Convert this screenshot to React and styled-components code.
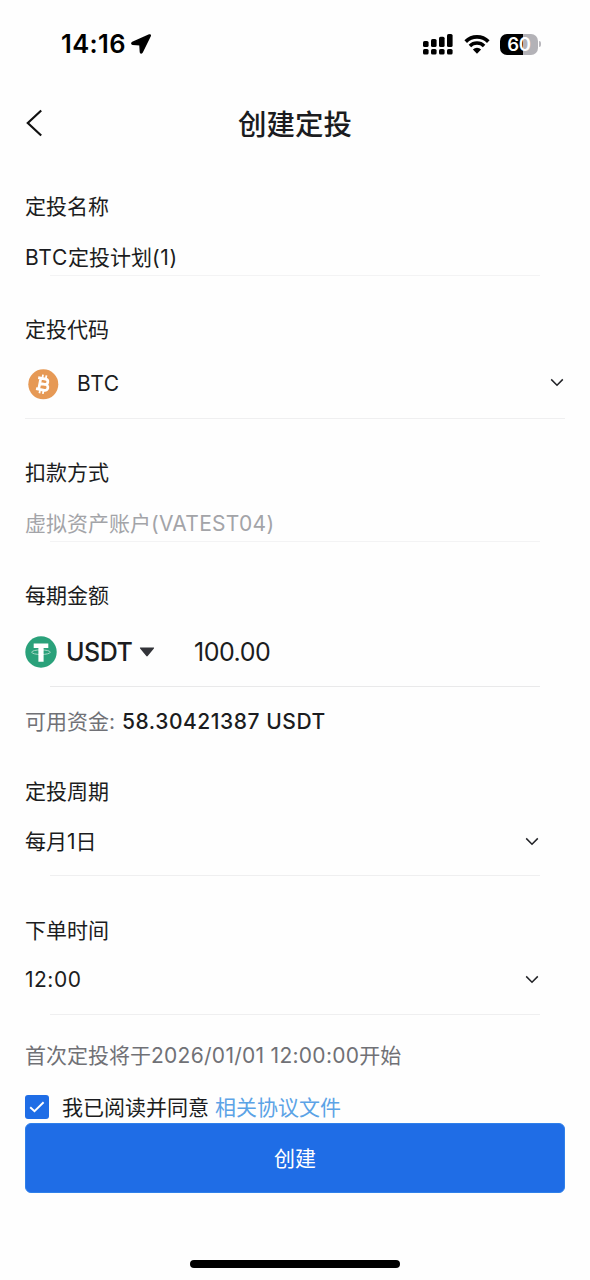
import React, { useState } from "react";
import styled, { createGlobalStyle } from "styled-components";

const GlobalStyle = createGlobalStyle`
  * {
    box-sizing: border-box;
  }
  body {
    margin: 0;
    background: #fefefe;
    color: #1b1c20;
    font-family: Inter, "Noto Sans CJK SC", sans-serif;
  }
`;

const Page = styled.div`
  width: 590px;
  height: 1280px;
  display: flex;
  flex-direction: column;
  background: #fefefe;
  overflow: hidden;
`;

const StatusBar = styled.div`
  height: 88px;
  flex-shrink: 0;
  padding: 0 49px 0 61px;
  display: flex;
  align-items: center;
  justify-content: space-between;
  color: #000;
`;

const StatusGroup = styled.div`
  display: flex;
  align-items: center;
  gap: ${(props) => props.$gap}px;
`;

const Clock = styled.span`
  font-size: 25.5px;
  font-weight: 600;
  line-height: 30px;
  letter-spacing: 0.4px;
`;

const Battery = styled.div`
  display: flex;
  align-items: center;
  gap: 1px;
`;

const BatteryBody = styled.div`
  width: 38px;
  height: 21px;
  border-radius: 7px;
  background: linear-gradient(90deg, #000 60%, #b3b2b7 60%);
  color: #fff;
  font-size: 18.5px;
  font-weight: 600;
  line-height: 21px;
  letter-spacing: -0.3px;
  text-align: center;
`;

const BatteryTip = styled.div`
  width: 2px;
  height: 6px;
  border-radius: 0 2px 2px 0;
  background: #b9b8bd;
`;

const NavBar = styled.div`
  height: 70px;
  flex-shrink: 0;
  padding: 0 25px;
  display: grid;
  grid-template-columns: 40px 1fr 40px;
  align-items: center;
`;

const BackButton = styled.div`
  display: flex;
  cursor: pointer;
`;

const Title = styled.div`
  padding-top: 3px;
  font-size: 28.5px;
  font-weight: 500;
  line-height: 40px;
  text-align: center;
`;

const Form = styled.div`
  padding: 33px 25px 0;
  display: flex;
  flex-direction: column;
`;

const Field = styled.div`
  display: flex;
  flex-direction: column;
  margin-bottom: ${(props) => props.$after}px;
`;

const Label = styled.div`
  height: 30px;
  font-size: 21px;
  line-height: 32px;
`;

const Row = styled.div`
  height: ${(props) => props.$height}px;
  margin-top: ${(props) => props.$gap}px;
  padding-right: ${(props) => (props.$full ? 1 : 26)}px;
  display: flex;
  align-items: center;
  cursor: ${(props) => (props.$select ? "pointer" : "default")};
`;

const Divider = styled.div`
  height: 1px;
  margin: 0 ${(props) => (props.$full ? 0 : 25)}px;
  background: ${(props) => props.$color || "#efeff0"};
`;

const Value = styled.div`
  flex: 1;
  padding-top: ${(props) => (props.$mixed ? 2 : 0)}px;
  font-size: 21px;
  line-height: 30px;
  color: ${(props) => (props.$disabled ? "#a3a4a8" : "#1b1c20")};
`;

const Latin = styled.span`
  letter-spacing: ${(props) => props.$spacing}px;
`;

const CoinIcon = styled.div`
  display: flex;
  margin: 1px 18px 0 3px;
`;

const SelectArrow = styled.div`
  display: flex;
  padding-bottom: ${(props) => props.$lift || 0}px;
`;

const Currency = styled.div`
  width: 169px;
  display: flex;
  align-items: center;
  font-size: 25px;
  font-weight: 500;
  line-height: 32px;
  cursor: pointer;
`;

const CurrencyName = styled.span`
  margin: 0 7px 0 9px;
  letter-spacing: -0.5px;
`;

const Amount = styled.div`
  font-size: 25px;
  line-height: 32px;
  letter-spacing: -0.5px;
`;

const Available = styled.div`
  height: 30px;
  margin: 19px 0 40px;
  font-size: 21px;
  line-height: 31px;
  color: #707176;
`;

const AvailableAmount = styled.span`
  margin-left: 1px;
  font-weight: 500;
  letter-spacing: 0.55px;
  color: #1b1c20;
`;

const Notice = styled.div`
  height: 30px;
  font-size: 21px;
  line-height: 32px;
  color: #707176;
`;

const Agreement = styled.div`
  height: 24px;
  margin-top: 25px;
  display: flex;
  align-items: center;
  font-size: 21px;
  line-height: 24px;
`;

const AgreementText = styled.span`
  padding-top: 2px;
`;

const Checkbox = styled.div`
  width: 24px;
  height: 24px;
  margin-right: 13px;
  border-radius: 3px;
  display: flex;
  align-items: center;
  justify-content: center;
  background: ${(props) => (props.$checked ? "#1f6de6" : "#d5d6da")};
  cursor: pointer;
`;

const AgreementLink = styled(AgreementText)`
  margin-left: 6px;
  color: #5ba3e6;
  cursor: pointer;
`;

const SubmitButton = styled.div`
  height: 70px;
  margin-top: 4px;
  border: 1px solid #2f80ea;
  border-radius: 6px;
  background: #1f6de6;
  color: #fff;
  font-size: 21px;
  line-height: 69px;
  text-align: center;
  cursor: pointer;
`;

const HomeIndicator = styled.div`
  width: 210px;
  height: 8px;
  margin: auto auto 12px;
  border-radius: 4px;
  background: #000;
`;

const LocationArrow = () => (
  <svg width="20" height="20" viewBox="0 0 20 20">
    <path
      d="M18.300 1 1.500 8.400c-1 .5-.9 1.700.2 1.800l7.200.5.5 7.400c.1 1.100 1.300 1.200 1.800.2L19.200 1.900c.3-.7-.2-1.200-.9-.9z"
      fill="#000"
      stroke="#000"
      strokeWidth="1.400"
      strokeLinejoin="round"
    />
  </svg>
);

// 双卡信号
const SignalIcon = () => (
  <svg width="31" height="21" viewBox="0 0 31 21">
    <rect x="0" y="7" width="5.600" height="6" rx="1.600" />
    <rect x="8" y="5" width="5.600" height="8" rx="1.600" />
    <rect x="16" y="2.700" width="5.600" height="10.300" rx="1.600" />
    <rect x="24" y="0" width="5.600" height="13" rx="1.600" />
    <rect x="0" y="15" width="5.600" height="5.600" rx="1.600" />
    <rect x="8" y="15" width="5.600" height="5.600" rx="1.600" />
    <rect x="16" y="15" width="5.600" height="5.600" rx="1.600" />
    <rect x="24" y="15" width="5.600" height="5.600" rx="1.600" />
  </svg>
);

const WifiIcon = () => (
  <svg width="26" height="19" viewBox="0 0 26 19" fill="none" stroke="#000">
    <path d="M1.700 6.600a16 16 0 0 1 22.600 0" strokeWidth="3.700" />
    <path d="M5.900 11a10 10 0 0 1 14.200 0" strokeWidth="3.500" />
    <path d="M13 18.800l-4.100-4.300a5.800 5.800 0 0 1 8.200 0z" fill="#000" stroke="none" />
  </svg>
);

const BackIcon = () => (
  <svg width="18" height="28" viewBox="0 0 18 28" fill="none">
    <path d="M16.200 1.500 2.800 14l13.400 12.500" stroke="#111" strokeWidth="2.200" />
  </svg>
);

const ArrowDown = () => (
  <svg width="14" height="9" viewBox="0 0 14 9" fill="none">
    <path d="M1.200 1.400 7 7.200l5.800-5.800" stroke="#222327" strokeWidth="1.500" />
  </svg>
);

const Caret = () => (
  <svg width="16" height="10" viewBox="0 0 16 10">
    <path d="M1.500.5h13c.6 0 .8.5.4.9L8.700 9c-.4.500-1 .500-1.400 0L1.100 1.400C.7 1 .9.5 1.500.5z" fill="#333439" />
  </svg>
);

const BitcoinIcon = () => (
  <svg width="31" height="31" viewBox="0 0 31 31">
    <circle cx="15.300" cy="15.300" r="15" fill="#e69955" />
    <g transform="rotate(11 15.300 15.300)" fill="none" stroke="#fff">
      <path
        d="M9 9.700h7.600a2.700 2.700 0 0 1 0 5.400h-4.900M16.600 15.100h.9a2.950 2.950 0 0 1 0 5.900H9M11.700 9.700V21"
        strokeWidth="2.700"
      />
      <path d="M13.200 5.900v3.200M16.700 5.900v3.200M13.200 21.600v3.200M16.700 21.600v3.200" strokeWidth="1.800" />
    </g>
  </svg>
);

const TetherIcon = () => (
  <svg width="32" height="32" viewBox="0 0 32 32">
    <circle cx="16" cy="16" r="15.700" fill="#2aa17a" />
    <ellipse cx="16" cy="16.200" rx="9.300" ry="2.300" fill="none" stroke="#a9d8c7" strokeWidth="1" />
    <path d="M8.700 7.600h14.600v4.500h-4.700v13.700h-5.200V12.100H8.700z" fill="#fff" />
  </svg>
);

const CheckIcon = () => (
  <svg width="16" height="12" viewBox="0 0 16 12" fill="none">
    <path d="M1.200 6.200 5.500 10.200 14.600 1.300" stroke="#fff" strokeWidth="1.900" />
  </svg>
);

const App = () => {
  const [agreed, setAgreed] = useState(true);

  return (
    <Page>
      <GlobalStyle />
      <StatusBar>
        <StatusGroup $gap={5}>
          <Clock>14:16</Clock>
          <LocationArrow />
        </StatusGroup>
        <StatusGroup $gap={10}>
          <SignalIcon />
          <WifiIcon />
          <Battery>
            <BatteryBody>60</BatteryBody>
            <BatteryTip />
          </Battery>
        </StatusGroup>
      </StatusBar>

      <NavBar>
        <BackButton>
          <BackIcon />
        </BackButton>
        <Title>创建定投</Title>
      </NavBar>

      <Form>
        <Field $after={38}>
          <Label>定投名称</Label>
          <Row $gap={18} $height={36}>
            <Value $mixed>
              <Latin $spacing={0.7}>BTC</Latin>定投计划<Latin $spacing={0.7}>(1)</Latin>
            </Value>
          </Row>
          <Divider $color="#f3f3f4" />
        </Field>

        <Field $after={38}>
          <Label>定投代码</Label>
          <Row $gap={6} $height={68} $full $select>
            <CoinIcon>
              <BitcoinIcon />
            </CoinIcon>
            <Value>
              <Latin $spacing={0.6}>BTC</Latin>
            </Value>
            <SelectArrow $lift={3}>
              <ArrowDown />
            </SelectArrow>
          </Row>
          <Divider $full />
        </Field>

        <Field $after={38}>
          <Label>扣款方式</Label>
          <Row $gap={18} $height={36}>
            <Value $mixed $disabled>
              虚拟资产账户<Latin $spacing={0.3}>(VATEST04)</Latin>
            </Value>
          </Row>
          <Divider $color="#f3f3f4" />
        </Field>

        <Field $after={0}>
          <Label>每期金额</Label>
          <Row $gap={8} $height={68}>
            <Currency>
              <TetherIcon />
              <CurrencyName>USDT</CurrencyName>
              <Caret />
            </Currency>
            <Amount>100.00</Amount>
          </Row>
          <Divider $color="#e9e9ea" />
        </Field>
        <Available>
          可用资金: <AvailableAmount>58.30421387 USDT</AvailableAmount>
        </Available>

        <Field $after={39}>
          <Label>定投周期</Label>
          <Row $gap={1} $height={68} $select>
            <Value $mixed>每月1日</Value>
            <SelectArrow>
              <ArrowDown />
            </SelectArrow>
          </Row>
          <Divider />
        </Field>

        <Field $after={25}>
          <Label>下单时间</Label>
          <Row $gap={0} $height={69} $select>
            <Value>
              <Latin $spacing={0.5}>12:00</Latin>
            </Value>
            <SelectArrow>
              <ArrowDown />
            </SelectArrow>
          </Row>
          <Divider />
        </Field>

        <Notice>
          首次定投将于<Latin $spacing={0.28}>2026/01/01 12:00:00</Latin>开始
        </Notice>
        <Agreement>
          <Checkbox $checked={agreed} onClick={() => setAgreed(!agreed)}>
            {agreed && <CheckIcon />}
          </Checkbox>
          <AgreementText>我已阅读并同意</AgreementText>
          <AgreementLink>相关协议文件</AgreementLink>
        </Agreement>
        <SubmitButton>创建</SubmitButton>
      </Form>
      <HomeIndicator />
    </Page>
  );
};

export default App;
